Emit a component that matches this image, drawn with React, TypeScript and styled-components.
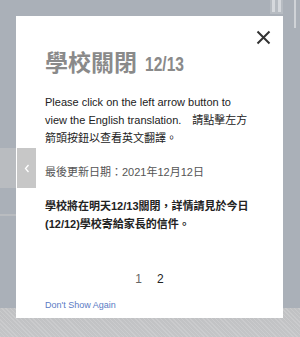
import styled, { createGlobalStyle } from 'styled-components';

const GlobalStyle = createGlobalStyle`
  html, body {
    margin: 0;
    padding: 0;
    background: #aab0b8;
  }
  * {
    box-sizing: border-box;
  }
`;

const Page = styled.div`
  position: relative;
  width: 300px;
  height: 337px;
  overflow: hidden;
  padding: 16px 0 0 16px;
  background:
    repeating-linear-gradient(45deg, rgba(255, 255, 255, 0.14) 0 1px, transparent 1px 3px) 0 308px / 100% 29px no-repeat,
    linear-gradient(#c0c1c3, #c4c5c7) 0 308px / 100% 29px no-repeat,
    #aab0b8;
  font-family: "Liberation Sans", "Noto Sans CJK TC", sans-serif;
`;

// things of the page behind the overlay
const BackdropBars = styled.div`
  position: absolute;
  top: 0;
  right: 17px;
  display: flex;
  gap: 3px;
  padding: 0 2px;
  height: 14px;
  background: #b7bcc2;

  span {
    width: 3px;
    height: 12px;
    background: #d6d9dd;
  }
`;

const BackdropLine = styled.div`
  position: absolute;
  top: 0;
  right: 4px;
  width: 2px;
  height: 28px;
  background: #d0d3d7;
`;

const BackdropBand = styled.div<{ $top: number; $height: number }>`
  position: absolute;
  left: 0;
  width: 16px;
  top: ${(p) => p.$top}px;
  height: ${(p) => p.$height}px;
  background: #b9bcc0;
`;

const Modal = styled.div`
  position: relative;
  width: 267px;
  height: 302px;
  background: #ffffff;
  padding: 29px 30px 0 29px;
  display: flex;
  flex-direction: column;
`;

const CloseButton = styled.button`
  position: absolute;
  top: 12px;
  right: 11px;
  width: 18px;
  height: 18px;
  padding: 0;
  border: none;
  background: none;
  display: flex;
  align-items: center;
  justify-content: center;
`;

const SideTab = styled.button`
  position: absolute;
  left: 1px;
  top: 132px;
  width: 19px;
  height: 40px;
  padding: 0;
  border: none;
  background: #c7c7c7;
  display: flex;
  align-items: center;
  justify-content: center;
`;

const Title = styled.h1`
  margin: 0 0 13px;
  font-family: "Noto Sans CJK TC", sans-serif;
  font-size: 23px;
  font-weight: 700;
  line-height: 32px;
  color: #8a8a8a;
  white-space: nowrap;

  span {
    display: inline-block;
    margin-left: 8px;
    font-family: "Liberation Sans", sans-serif;
    font-size: 20px;
    transform: scaleX(0.78);
    transform-origin: left center;
  }
`;

const Paragraph = styled.p<{ $bold?: boolean; $muted?: boolean }>`
  margin: 0 0 16px;
  font-size: 11px;
  line-height: 18px;
  font-weight: ${(p) => (p.$bold ? 700 : 400)};
  color: ${(p) => (p.$muted ? '#555555' : '#222222')};
`;

const Pager = styled.div`
  margin-top: auto;
  display: flex;
  justify-content: center;
  gap: 15px;
  padding-left: 1px;
  font-size: 12px;
  line-height: 16px;
`;

const PageNum = styled.span<{ $active?: boolean }>`
  color: ${(p) => (p.$active ? '#222222' : '#666666')};
`;

const DontShow = styled.a`
  margin: 12px 0 7px;
  font-size: 9px;
  line-height: 12px;
  color: #5b7bc4;
  text-decoration: none;
`;

export default function App() {
  return (
    <Page>
      <GlobalStyle />
      <BackdropBars>
        <span />
        <span />
      </BackdropBars>
      <BackdropLine />
      <BackdropBand $top={148} $height={40} />
      <BackdropBand $top={214} $height={2} />
      <Modal>
        <CloseButton aria-label="close">
          <svg width="15" height="15" viewBox="0 0 15 15">
            <path d="M1.5 1.5 L13.5 13.5 M13.5 1.5 L1.5 13.5" stroke="#333" strokeWidth="2" />
          </svg>
        </CloseButton>
        <SideTab aria-label="previous">
          <svg width="6" height="9" viewBox="0 0 6 9">
            <path d="M4.5 1 L1.5 4.5 L4.5 8" stroke="#fff" strokeWidth="1.3" fill="none" />
          </svg>
        </SideTab>
        <Title>
          學校關閉<span>12/13</span>
        </Title>
        <Paragraph>
          Please click on the left arrow button to view the English translation.　請點擊左方箭頭按鈕以查看英文翻譯。
        </Paragraph>
        <Paragraph $muted>最後更新日期：2021年12月12日</Paragraph>
        <Paragraph $bold>學校將在明天12/13關閉，詳情請見於今日(12/12)學校寄給家長的信件。</Paragraph>
        <Pager>
          <PageNum>1</PageNum>
          <PageNum $active>2</PageNum>
        </Pager>
        <DontShow href="#">Don't Show Again</DontShow>
      </Modal>
    </Page>
  );
}
